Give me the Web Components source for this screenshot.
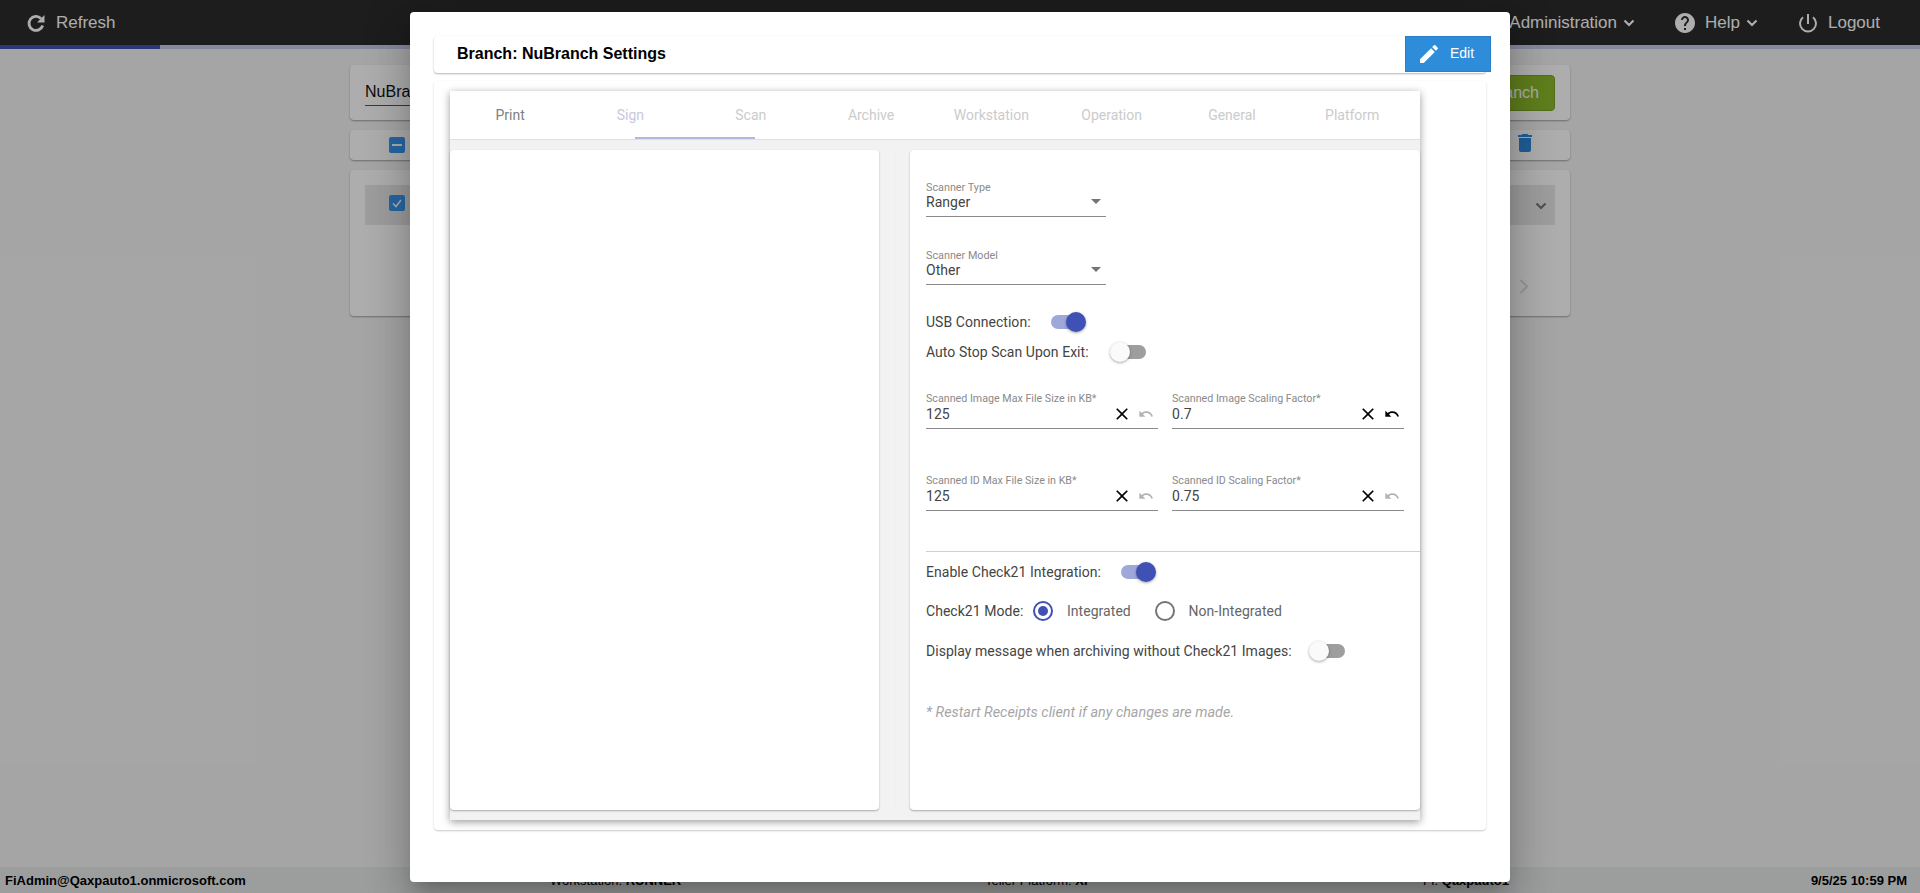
<!DOCTYPE html>
<html lang="en">
<head>
<meta charset="utf-8">
<title>Branch Settings</title>
<style>
    html, body { margin: 0; height: 100%; overflow: hidden; }
    body { font-family: Roboto, "Liberation Sans", sans-serif; background: #f4f4f4; }
</style>
</head>
<body>
<app-shell>
    <top-bar slot="top"></top-bar>
    <branch-page slot="main"></branch-page>
    <status-bar slot="bottom"></status-bar>
    <modal-overlay slot="overlay">
        <settings-dialog title="Branch: NuBranch Settings">
            <tab-strip tabs="Print,Sign,Scan,Archive,Workstation,Operation,General,Platform"></tab-strip>
            <scan-form slot="right"></scan-form>
        </settings-dialog>
    </modal-overlay>
</app-shell>

<script>
const ICONS = {
    help: "M12 2C6.48 2 2 6.48 2 12s4.48 10 10 10 10-4.48 10-10S17.52 2 12 2zm1 17h-2v-2h2v2zm2.07-7.75l-.9.92C13.45 12.9 13 13.5 13 15h-2v-.5c0-1.1.45-2.1 1.17-2.83l1.24-1.26c.37-.36.59-.86.59-1.41 0-1.1-.9-2-2-2s-2 .9-2 2H8c0-2.21 1.79-4 4-4s4 1.79 4 4c0 .88-.36 1.68-.93 2.25z",
    edit: "M3 17.25V21h3.75L17.81 9.94l-3.75-3.75L3 17.25zM20.71 7.04c.39-.39.39-1.02 0-1.41l-2.34-2.34c-.39-.39-1.02-.39-1.41 0l-1.83 1.83 3.75 3.75 1.83-1.83z",
    close: "M19 6.41L17.59 5 12 10.59 6.41 5 5 6.41 10.59 12 5 17.59 6.41 19 12 13.41 17.59 19 19 17.59 13.41 12z",
    undo: "M12.5 8c-2.65 0-5.05.99-6.9 2.6L2 7v9h9l-3.62-3.62c1.39-1.16 3.16-1.88 5.12-1.88 3.54 0 6.55 2.31 7.6 5.5l2.37-.78C21.08 11.03 17.15 8 12.5 8z",
    trash: "M6 19c0 1.1.9 2 2 2h8c1.1 0 2-.9 2-2V7H6v12zM19 4h-3.5l-1-1h-5l-1 1H5v2h14V4z"
};

const icon = (name, size, color) =>
    `<svg width="${size}" height="${size}" viewBox="0 0 24 24" fill="${color}" style="display:block;flex:none"><path d="${ICONS[name]}"/></svg>`;

const chevron = (size, color) =>
    `<svg width="${size}" height="${size}" viewBox="0 0 12 12" fill="none" stroke="${color}" stroke-width="2.2" style="display:block;flex:none"><path d="M1.5 3.5 6 8l4.5-4.5"/></svg>`;

class ShadowElement extends HTMLElement {
    constructor() {
        super();
        this.attachShadow({ mode: "open" });
    }
    connectedCallback() {
        this.shadowRoot.innerHTML = this.render();
    }
}

customElements.define("app-shell", class extends ShadowElement {
    render() {
        return `
            <style>
                :host { display: flex; flex-direction: column; height: 100vh; position: relative; overflow: hidden; }
                .main { flex: 1; min-height: 0; }
            </style>
            <slot name="top"></slot>
            <div class="main"><slot name="main"></slot></div>
            <slot name="bottom"></slot>
            <slot name="overlay"></slot>
        `;
    }
});

customElements.define("top-bar", class extends ShadowElement {
    render() {
        return `
            <style>
                :host { display: block; font-family: "Liberation Sans", sans-serif; font-size: 17px; color: #fff; }
                .bar { height: 45px; background: #2c2c2c; display: flex; align-items: center; padding: 0 40px 0 24px; }
                .item { display: flex; align-items: center; }
                .refresh { gap: 8px; margin-right: auto; }
                .admin { gap: 6px; }
                .help { margin-left: 38px; }
                .help span { margin: 0 6px 0 8px; }
                .logout { gap: 8px; margin-left: 38px; }
                .progress { height: 4px; background: #c5cae9; }
                .progress div { width: 160px; height: 4px; background: #3f51b5; }
            </style>
            <div class="bar">
                <div class="item refresh">
                    <svg width="24" height="24" viewBox="0 0 24 24" fill="none" style="display:block"><path d="M17 7.5A7 7 0 1 0 18.7 14.5" stroke="#fff" stroke-width="2.8"/><path d="M20.5 4v7.5H13z" fill="#fff"/></svg>
                    <span>Refresh</span>
                </div>
                <div class="item admin"><span>Administration</span>${chevron(12, "#fff")}</div>
                <div class="item help">${icon("help", 24, "#fff")}<span>Help</span>${chevron(12, "#fff")}</div>
                <div class="item logout">
                    <svg width="24" height="24" viewBox="0 0 24 24" fill="none" stroke="#fff" stroke-width="2"><path d="M12 3v10"/><path d="M7 6.2a8 8 0 1 0 10 0"/></svg>
                    <span>Logout</span>
                </div>
            </div>
            <div class="progress"><div></div></div>
        `;
    }
});

customElements.define("status-bar", class extends ShadowElement {
    render() {
        return `
            <style>
                :host { display: grid; grid-template-columns: 545px 435px 438px 1fr auto; align-items: center; height: 26px; padding: 0 13px 0 5px; box-sizing: border-box; background: #e6e9e9; font: 13px "Liberation Sans", sans-serif; color: #000; }
                b { font-weight: bold; }
            </style>
            <b>FiAdmin@Qaxpauto1.onmicrosoft.com</b>
            <span>Workstation: <b>RUNNER</b></span>
            <span>Teller Platform: <b>XI</b></span>
            <span>FI: <b>Qaxpauto1</b></span>
            <b style="grid-column:5">9/5/25 10:59 PM</b>
        `;
    }
});

customElements.define("branch-page", class extends ShadowElement {
    render() {
        return `
            <style>
                :host { display: flex; flex-direction: column; gap: 10px; width: 1220px; margin: 16px auto 0; font-family: "Liberation Sans", sans-serif; }
                .card { background: #fff; border-radius: 4px; box-shadow: 0 1px 2px rgba(0,0,0,.35); box-sizing: border-box; }
                .search { height: 55px; display: flex; justify-content: space-between; padding: 10px 15px 0; }
                .name { width: 400px; height: 30px; border-bottom: 1px solid #555; font-size: 16px; line-height: 33px; color: #111; }
                .add { height: 36px; width: 120px; background: #8cba2c; border: 1px solid #7ba224; border-radius: 4px; box-sizing: border-box; color: #fff; font-size: 16px; display: flex; align-items: center; justify-content: flex-end; padding-right: 15px; }
                .actions { height: 30px; display: flex; align-items: center; justify-content: space-between; padding: 0 33px 0 39px; }
                .actions > svg { margin-bottom: 4px; }
                .box { width: 16px; height: 16px; border-radius: 2px; background: #3999f1; display: flex; align-items: center; justify-content: center; }
                .list { height: 146px; padding: 15px; }
                .row { height: 40px; background: #e8e8e8; display: flex; align-items: flex-start; justify-content: space-between; padding: 10px 8px 0 24px; box-sizing: border-box; }
                .row > svg { margin-top: 5px; }
                .pager { display: flex; justify-content: flex-end; padding: 54px 26px 0 0; }
            </style>
            <div class="card search">
                <div class="name">NuBranch</div>
                <div class="add">Add Branch</div>
            </div>
            <div class="card actions">
                <div class="box"><svg width="12" height="12" viewBox="0 0 12 12"><path d="M1 6h10" stroke="#fff" stroke-width="2"/></svg></div>
                ${icon("trash", 24, "#2e8ce0")}
            </div>
            <div class="card list">
                <div class="row">
                    <div class="box"><svg width="12" height="12" viewBox="0 0 12 12" fill="none"><path d="M2 6.5 5 9.5 10 3" stroke="#fff" stroke-width="1.5"/></svg></div>
                    ${chevron(12, "#777")}
                </div>
                <div class="pager">
                    <svg width="10" height="15" viewBox="0 0 10 15" fill="none" stroke="#dedede" stroke-width="2"><path d="M1.5 1l6.500 6.500-6.500 6.500"/></svg>
                </div>
            </div>
        `;
    }
});

customElements.define("modal-overlay", class extends ShadowElement {
    render() {
        return `
            <style>
                :host { position: absolute; inset: 0; display: flex; justify-content: center; align-items: flex-start; padding-top: 12px; box-sizing: border-box; background: rgba(0,0,0,.32); }
            </style>
            <slot></slot>
        `;
    }
});

customElements.define("settings-dialog", class extends ShadowElement {
    render() {
        return `
            <style>
                :host { display: block; width: 1100px; height: 870px; box-sizing: border-box; padding: 24px; background: #fff; border-radius: 4px; box-shadow: 0 11px 15px -7px rgba(0,0,0,.2), 0 24px 38px 3px rgba(0,0,0,.14), 0 9px 46px 8px rgba(0,0,0,.12); font-family: Roboto, "Liberation Sans", sans-serif; }
                .head { height: 37px; box-sizing: border-box; display: flex; justify-content: space-between; align-items: flex-start; background: #fff; border-radius: 4px; box-shadow: 0 1px 2px rgba(0,0,0,.3); }
                h1 { margin: 0; padding-left: 23px; font: bold 16px/36px "Liberation Sans", sans-serif; color: #000; }
                .edit { width: 86px; height: 36px; margin-right: -5px; box-sizing: border-box; background: #2e8ddb; border: 1px solid #2a7fc6; color: #fff; font: 14px "Liberation Sans", sans-serif; display: flex; align-items: center; gap: 9px; padding-left: 11px; }
                .edit span { margin-bottom: 2px; }
                .card { margin-top: 8px; height: 749px; box-sizing: border-box; padding: 10px 66px 10px 16px; border-radius: 4px; box-shadow: 0 1px 2px rgba(0,0,0,.22); }
                .tabs-box { height: 729px; display: flex; flex-direction: column; background: #f2f2f2; box-shadow: 0 2px 8px rgba(0,0,0,.4); }
                .panes { flex: 1; display: grid; grid-template-columns: 445px 1fr; padding: 10px 0; min-height: 0; }
                .left { border-right: 1px solid #eeeeee; padding-right: 15px; }
                .right { padding-left: 15px; }
                .pane { height: 100%; box-sizing: border-box; background: #fff; border-radius: 4px; box-shadow: 0 1px 2px rgba(0,0,0,.3); }
            </style>
            <div class="head">
                <h1>${this.getAttribute("title")}</h1>
                <div class="edit">${icon("edit", 24, "#fff")}<span>Edit</span></div>
            </div>
            <div class="card">
                <div class="tabs-box">
                    <slot></slot>
                    <div class="panes">
                        <div class="left"><div class="pane"></div></div>
                        <div class="right"><div class="pane"><slot name="right"></slot></div></div>
                    </div>
                </div>
            </div>
        `;
    }
});

customElements.define("tab-strip", class extends ShadowElement {
    render() {
        const names = this.getAttribute("tabs").split(",");
        const colors = ["#808080", "#c8c8de"];
        const tabs = names.map((name, i) =>
            `<div class="tab" style="color:${colors[i] || "#cbcbcb"}">${name}</div>`).join("");
        return `
            <style>
                :host { display: block; background: #fff; position: relative; border-bottom: 1px solid #e0e0e0; font-size: 14px; }
                .tabs { display: flex; height: 48px; }
                .tab { width: 120.3px; display: flex; align-items: center; justify-content: center; }
                .ink { position: absolute; left: 185px; bottom: 0; width: 120px; height: 2px; background: #b2b9e1; }
            </style>
            <div class="tabs">${tabs}</div>
            <div class="ink"></div>
        `;
    }
});

customElements.define("toggle-switch", class extends ShadowElement {
    render() {
        const on = this.hasAttribute("checked");
        return `
            <style>
                :host { display: block; position: relative; flex: none; width: 34px; height: 14px; border-radius: 7px; background: ${on ? "#9fa8da" : "#9e9e9e"}; }
                .thumb { position: absolute; top: -3px; left: ${on ? "15px" : "-2px"}; width: 20px; height: 20px; border-radius: 50%; background: ${on ? "#3f51b5" : "#fafafa"}; box-shadow: 0 1px 3px rgba(0,0,0,.35); }
            </style>
            <div class="thumb"></div>
        `;
    }
});

customElements.define("radio-option", class extends ShadowElement {
    render() {
        const on = this.hasAttribute("checked");
        return `
            <style>
                :host { display: flex; align-items: center; gap: 14px; color: #666; }
                .ring { width: 20px; height: 20px; box-sizing: border-box; border-radius: 50%; border: 2px solid ${on ? "#3f51b5" : "#757575"}; display: flex; align-items: center; justify-content: center; }
                .dot { width: 10px; height: 10px; border-radius: 50%; background: ${on ? "#3f51b5" : "transparent"}; }
            </style>
            <div class="ring"><div class="dot"></div></div>
            <span><slot></slot></span>
        `;
    }
});

customElements.define("select-field", class extends ShadowElement {
    render() {
        return `
            <style>
                :host { display: block; width: 180px; height: 36px; padding-top: 1px; box-sizing: border-box; border-bottom: 1px solid #8a8a8a; }
                .label { font-size: 10.8px; line-height: 12px; color: #8a8a8a; letter-spacing: 0; }
                .value { display: flex; justify-content: space-between; align-items: center; font-size: 14px; line-height: 17px; color: #444; padding-right: 5px; }
                .arrow { width: 0; height: 0; margin-top: -3px; border-left: 5px solid transparent; border-right: 5px solid transparent; border-top: 5px solid #757575; }
            </style>
            <div class="label">${this.getAttribute("label")}</div>
            <div class="value"><span><slot></slot></span><div class="arrow"></div></div>
        `;
    }
});

customElements.define("clear-field", class extends ShadowElement {
    render() {
        const undoColor = this.hasAttribute("dirty") ? "#000" : "#b3b3b3";
        return `
            <style>
                :host { display: block; flex: none; width: 232px; height: 36px; box-sizing: border-box; border-bottom: 1px solid #8a8a8a; }
                .label { font-size: 10.7px; line-height: 12px; color: #8a8a8a; white-space: nowrap; letter-spacing: 0; }
                .value { display: flex; align-items: center; gap: 6px; height: 18px; font-size: 14px; color: #444; padding-right: 4.5px; }
                .text { flex: 1; }
            </style>
            <div class="label">${this.getAttribute("label")}</div>
            <div class="value">
                <span class="text"><slot></slot></span>
                ${icon("close", 20, "#000")}
                ${icon("undo", 16, undoColor)}
            </div>
        `;
    }
});

customElements.define("scan-form", class extends ShadowElement {
    render() {
        return `
            <style>
                :host { display: block; padding: 31px 0 0 16px; font-size: 14px; color: #444; letter-spacing: .04px; }
                .row { display: flex; align-items: center; height: 24px; }
                .row > span { flex: none; }
                .pair { display: flex; gap: 14px; }
                hr { margin: 40px 0 8px; border: 0; border-top: 1px solid #cfcfcf; }
                .note { margin-top: 42px; font-style: italic; font-size: 14.4px; line-height: 16px; color: #a6a6a6; letter-spacing: 0; }
            </style>
            <select-field label="Scanner Type">Ranger</select-field>
            <select-field label="Scanner Model" style="margin-top:32px">Other</select-field>
            <div class="row" style="margin-top:25px"><span style="width:124.5px">USB Connection:</span><toggle-switch checked></toggle-switch></div>
            <div class="row" style="margin-top:6px"><span style="width:185.5px">Auto Stop Scan Upon Exit:</span><toggle-switch></toggle-switch></div>
            <div class="pair" style="margin-top:29px">
                <clear-field label="Scanned Image Max File Size in KB*">125</clear-field>
                <clear-field label="Scanned Image Scaling Factor*" dirty>0.7</clear-field>
            </div>
            <div class="pair" style="margin-top:46px">
                <clear-field label="Scanned ID Max File Size in KB*">125</clear-field>
                <clear-field label="Scanned ID Scaling Factor*">0.75</clear-field>
            </div>
            <hr>
            <div class="row"><span style="width:194.5px">Enable Check21 Integration:</span><toggle-switch checked></toggle-switch></div>
            <div class="row" style="margin-top:15px">
                <span style="width:107px">Check21 Mode:</span>
                <radio-option checked style="width:121.5px">Integrated</radio-option>
                <radio-option>Non-Integrated</radio-option>
            </div>
            <div class="row" style="margin-top:16px"><span style="width:384.5px">Display message when archiving without Check21 Images:</span><toggle-switch></toggle-switch></div>
            <div class="note">* Restart Receipts client if any changes are made.</div>
        `;
    }
});
</script>
</body>
</html>
